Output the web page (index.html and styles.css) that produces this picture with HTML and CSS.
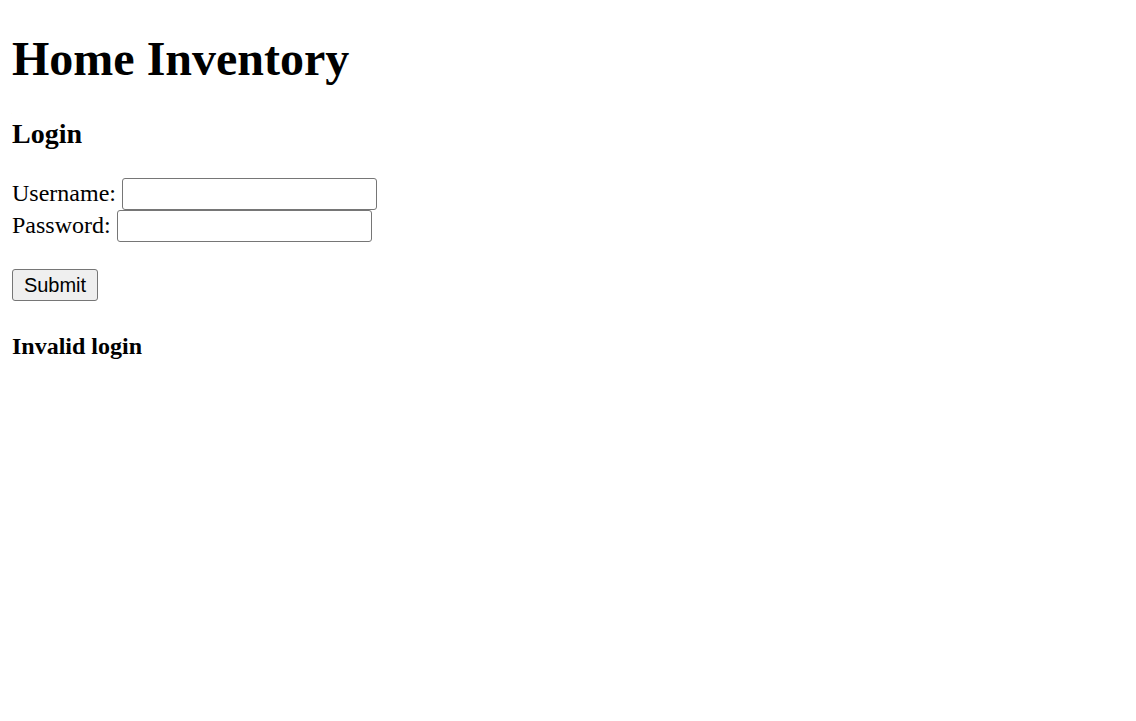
FILE: index.html
```html
<!DOCTYPE html>
<html>
<head>
<meta charset="utf-8">
<title>Home Inventory</title>
<link rel="stylesheet" href="styles.css">
</head>
<body>
<h1 class="title">Home Inventory</h1>
<h3 class="subtitle">Login</h3>
<form class="login-form">
Username: <input class="field" type="text" name="username"><br>
Password: <input class="field" type="password" name="password"><br>
<br>
<button class="submit" type="button">Submit</button>
</form>
<h4 class="message">Invalid login</h4>
</body>
</html>
```
FILE: styles.css
```css
html {
  background: #fff;
}
body {
  margin: 12px;
  font-family: "Liberation Serif", "Times New Roman", serif;
  font-size: 24px;
  color: #000;
}
.title {
  font-size: 48px;
  font-weight: bold;
  margin: 19px 0 32px;
}
.subtitle {
  font-size: 28px;
  font-weight: bold;
  margin: 28px 0;
}
.login-form {
  margin: 0;
}
.field {
  box-sizing: border-box;
  width: 255px;
  height: 32px;
  border: 1.5px solid #767676;
  border-radius: 3px;
  padding: 1px 3px;
  font-family: "Liberation Sans", Arial, sans-serif;
  font-size: 20px;
  background: #fff;
  vertical-align: baseline;
  margin: 0;
}
.submit {
  box-sizing: border-box;
  width: 86px;
  height: 32px;
  margin: 0;
  padding: 1px 9px;
  font-family: "Liberation Sans", Arial, sans-serif;
  font-size: 20px;
  color: #000;
  background: #efefef;
  border: 1.5px solid #767676;
  border-radius: 3px;
}
.message {
  font-size: 24px;
  font-weight: bold;
  margin: 32px 0;
}
```
